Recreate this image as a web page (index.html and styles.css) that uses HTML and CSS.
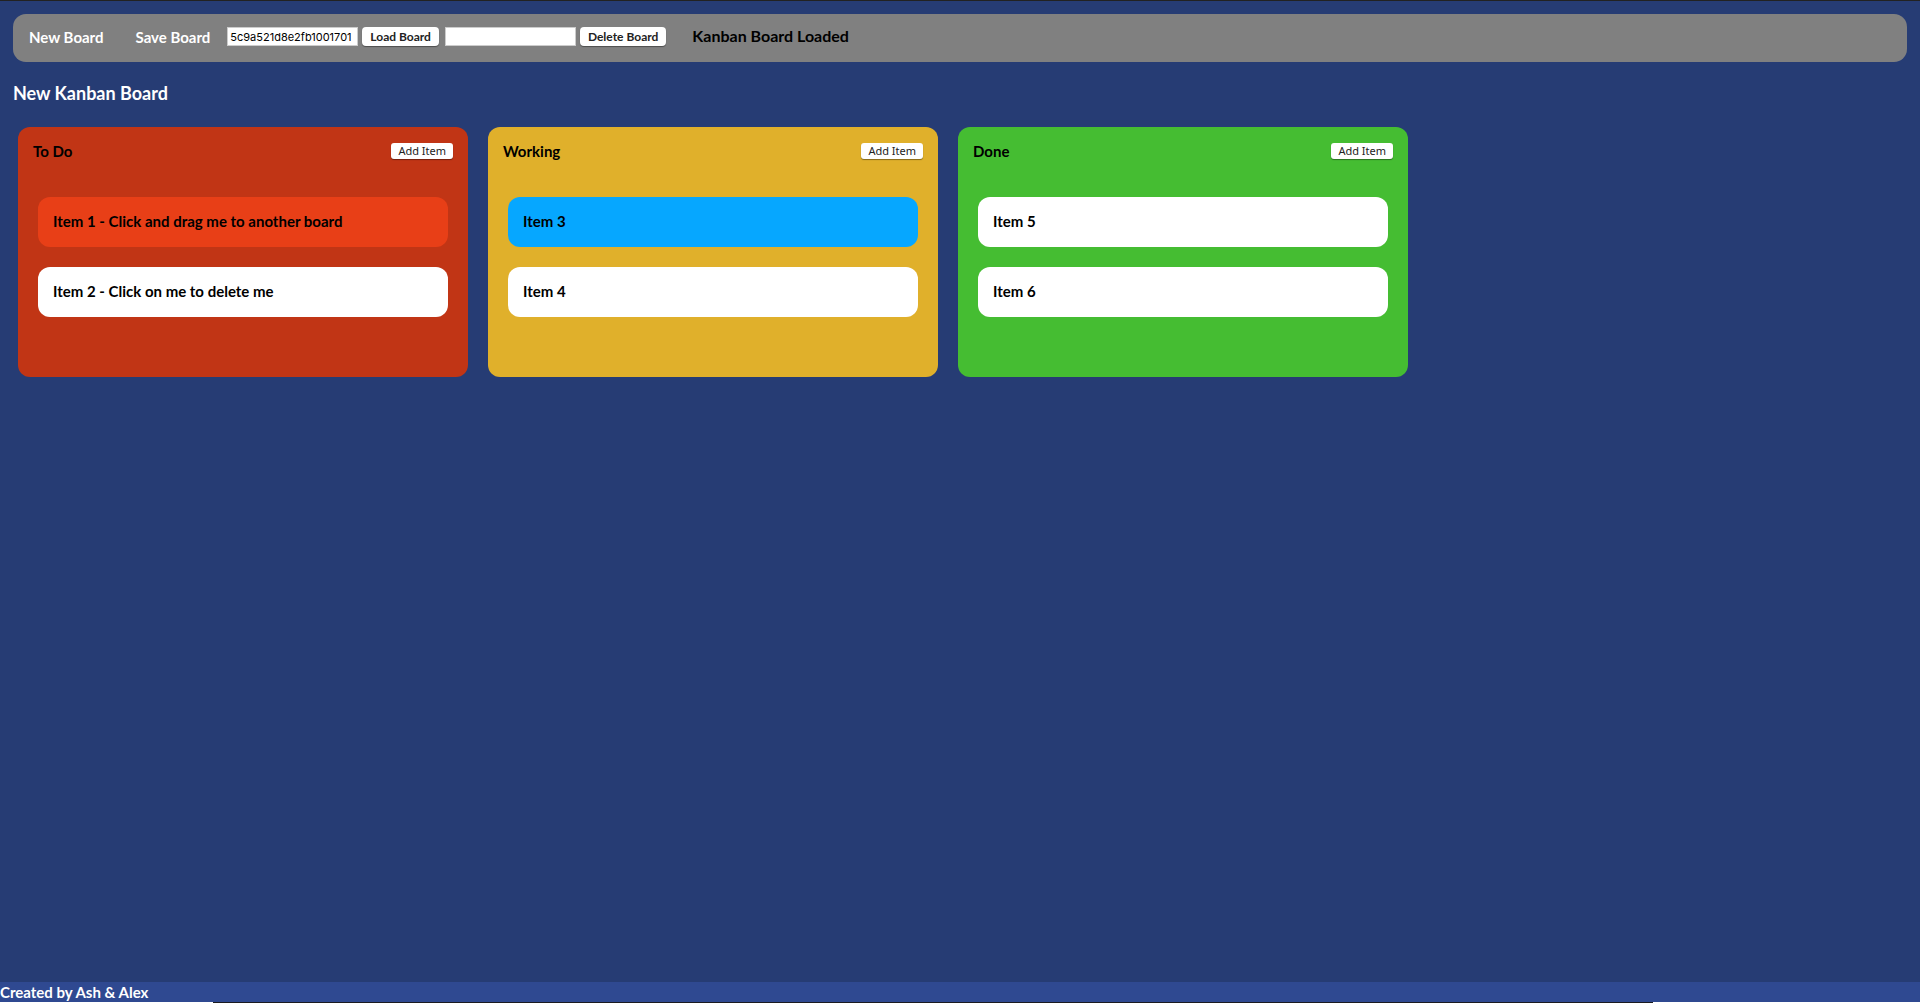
FILE: index.html
```html
<!DOCTYPE html>
<html lang="en">
<head>
<meta charset="utf-8">
<title>Kanban Board</title>
<link rel="stylesheet" href="styles.css">
</head>
<body>
<header class="toolbar">
  <nav class="menu">
    <a class="menu-link" href="#new">New Board</a>
    <a class="menu-link" href="#save">Save Board</a>
  </nav>
  <form class="board-form">
    <input class="board-id" type="text" aria-label="Board to load" value="5c9a521d8e2fb1001701">
    <button class="button" type="button">Load Board</button>
  </form>
  <form class="board-form">
    <input class="board-id" type="text" aria-label="Board to delete">
    <button class="button" type="button">Delete Board</button>
  </form>
  <p class="status">Kanban Board Loaded</p>
</header>
<main class="main">
  <h1 class="board-title">New Kanban Board</h1>
  <div class="columns">
    <section class="column todo">
      <div class="column-head">
        <h2 class="column-title">To Do</h2>
        <button class="button small" type="button">Add Item</button>
      </div>
      <ul class="items">
        <li class="item orange">Item 1 - Click and drag me to another board</li>
        <li class="item">Item 2 - Click on me to delete me</li>
      </ul>
    </section>
    <section class="column working">
      <div class="column-head">
        <h2 class="column-title">Working</h2>
        <button class="button small" type="button">Add Item</button>
      </div>
      <ul class="items">
        <li class="item blue">Item 3</li>
        <li class="item">Item 4</li>
      </ul>
    </section>
    <section class="column done">
      <div class="column-head">
        <h2 class="column-title">Done</h2>
        <button class="button small" type="button">Add Item</button>
      </div>
      <ul class="items">
        <li class="item">Item 5</li>
        <li class="item">Item 6</li>
      </ul>
    </section>
  </div>
</main>
<footer class="footer">Created by Ash &amp; Alex</footer>
<div class="edge"></div>
</body>
</html>
```
FILE: styles.css
```css
* {
  box-sizing: border-box;
}

body {
  display: flex;
  flex-direction: column;
  min-height: 100vh;
  margin: 0;
  border-top: 1px solid #222;
  background: #263c74;
  color: #000;
  font-family: Lato, "Noto Sans", sans-serif;
  font-size: 15px;
  font-weight: 700;
  line-height: 20px;
}

.toolbar {
  display: flex;
  align-items: flex-start;
  gap: 6px;
  min-height: 48px;
  margin: 13px 13px 0;
  padding: 13px 16px;
  border-radius: 13px;
  background: #808080;
}

.menu {
  display: flex;
  gap: 32px;
  margin-right: 11px;
}

.menu-link {
  color: #fff;
  text-decoration: none;
}

.board-form {
  display: flex;
  gap: 4px;
}

.board-id {
  width: 131px;
  height: 19px;
  padding: 1px 2px;
  border: 1px solid #ccc;
  background: #fff;
  font: 11px/15px Inter, sans-serif;
}

.button {
  height: 19px;
  padding: 0 8px;
  border: 0;
  border-radius: 4px;
  background: #fff;
  box-shadow: 0 1px 1px rgba(0, 0, 0, 0.4);
  color: #222;
  font: 700 12px/18px Lato, sans-serif;
  white-space: nowrap;
}

.small {
  height: 16px;
  padding: 0 7px;
  border-radius: 3px;
  font: 11px/16px "Noto Sans", sans-serif;
}

.status {
  margin: 0 0 0 20px;
  font-size: 16px;
  line-height: 18px;
}

.main {
  flex: 1;
  padding: 0 13px;
}

.board-title {
  margin: 19px 0 22px;
  color: #fff;
  font-size: 18px;
  line-height: 24px;
}

.columns {
  display: flex;
  flex-wrap: wrap;
  gap: 20px;
  padding: 0 5px;
}

.column {
  width: 450px;
  min-height: 250px;
  padding: 14px 15px;
  border-radius: 12px;
}

.todo {
  background: #c13515;
}

.working {
  background: #e0b02b;
}

.done {
  background: #45bd32;
}

.column-head {
  display: flex;
  align-items: center;
  justify-content: space-between;
}

.column-title {
  margin: 0;
  font-size: 15px;
}

.items {
  display: grid;
  gap: 20px;
  margin: 36px 5px 0;
  padding: 0;
  list-style: none;
}

.item {
  padding: 14px 15px 16px;
  border-radius: 12px;
  background: #fff;
}

.orange {
  background: #e83f17;
}

.blue {
  background: #06a7ff;
}

.footer {
  background: #2f4991;
  color: #fff;
}

.edge {
  height: 1px;
  background: linear-gradient(90deg, #fff 0 11.1%, #1b1b1f 11.1% 86.1%, #fff 86.1%);
}
```
